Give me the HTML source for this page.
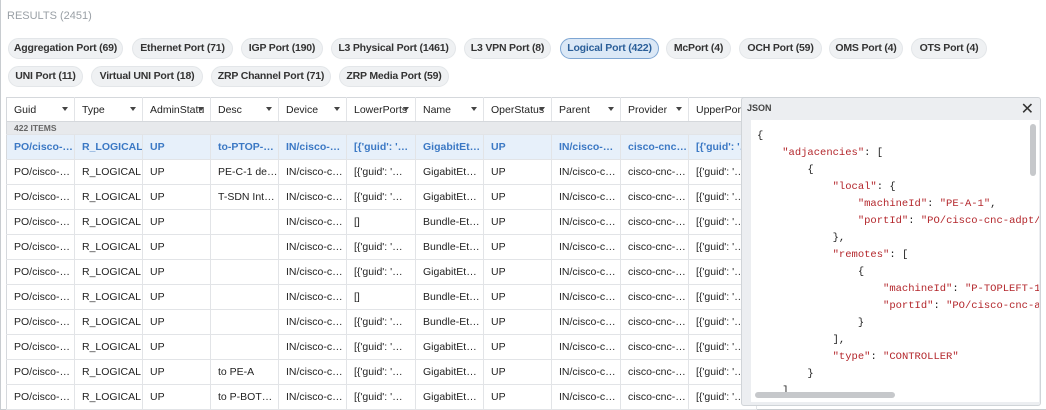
<!DOCTYPE html>
<html><head><meta charset="utf-8"><style>
*{box-sizing:border-box;margin:0;padding:0}
body{width:1046px;height:410px;background:#fff;font-family:"Liberation Sans",sans-serif;position:relative;overflow:hidden}
.frame{position:absolute;left:0;top:0;width:1046px;height:410px;border:1px solid #c8ccd0;border-top:none;border-right:none}
.title{position:absolute;left:7px;top:10px;font-size:11px;color:#9aa0a6}
.chip{position:absolute;height:21px;border-radius:11px;background:#eff1f3;border:1px solid #e3e6e9;font-size:10.5px;letter-spacing:-0.2px;font-weight:bold;color:#333;line-height:19px;text-align:center;white-space:nowrap}
.chip.sel{background:#dbe8f6;border-color:#7ea6d3;color:#2b5f99}
table{position:absolute;left:6px;top:97px;border-collapse:collapse;font-size:10.5px;table-layout:fixed;width:730px;border:1px solid #d5d8dc}
td,th{height:25px;border-right:1px solid #e2e4e7;border-bottom:1px solid #e2e4e7;padding:0 7px;white-space:nowrap;overflow:hidden;text-align:left;font-weight:normal;color:#222}
th{height:24px;background:#fff;border-bottom:1px solid #d5d8dc;position:relative}
th span.a{position:absolute;right:6px;top:9px;border-left:3px solid transparent;border-right:3px solid transparent;border-top:4px solid #444}
tr.items td{height:13px;background:#e7e9ec;font-size:8.5px;font-weight:bold;color:#666;border-right:none}
tr.sel td{background:#e7f0fa;color:#3b78c4;font-weight:bold}
.json{position:absolute;left:741px;top:97px;width:300px;height:309px;background:#eceef1;border:1px solid #d0d4d8;border-radius:3px}
.json .h{position:absolute;left:5px;top:5px;font-size:9px;font-weight:bold;color:#444}
.json .x{position:absolute;right:6px;top:1px;font-size:16px;color:#333}
.code{position:absolute;left:9px;top:22px;width:288px;height:282px;background:#fff;overflow:hidden;font-family:"Liberation Mono",monospace;font-size:10.5px;color:#222}
.code pre{position:absolute;left:6px;top:8px;line-height:17px;font-family:inherit}
.k{color:#b3262b}
.vs{position:absolute;right:3px;top:4px;width:6px;height:52px;border-radius:3px;background:#c6c8cb}
.hs{position:absolute;left:4px;bottom:4px;width:140px;height:6px;border-radius:3px;background:#c6c8cb}
</style></head><body>
<div class="frame"></div>
<div class="title">RESULTS (2451)</div>
<div class="chip" style="left:8px;top:38px;width:115px">Aggregation Port (69)</div>
<div class="chip" style="left:132px;top:38px;width:101px">Ethernet Port (71)</div>
<div class="chip" style="left:241px;top:38px;width:82px">IGP Port (190)</div>
<div class="chip" style="left:331px;top:38px;width:125px">L3 Physical Port (1461)</div>
<div class="chip" style="left:464px;top:38px;width:87px">L3 VPN Port (8)</div>
<div class="chip sel" style="left:560px;top:38px;width:99px">Logical Port (422)</div>
<div class="chip" style="left:666px;top:38px;width:65px">McPort (4)</div>
<div class="chip" style="left:739px;top:38px;width:83px">OCH Port (59)</div>
<div class="chip" style="left:829px;top:38px;width:74px">OMS Port (4)</div>
<div class="chip" style="left:911px;top:38px;width:76px">OTS Port (4)</div>
<div class="chip" style="left:8px;top:66px;width:75px">UNI Port (11)</div>
<div class="chip" style="left:91px;top:66px;width:112px">Virtual UNI Port (18)</div>
<div class="chip" style="left:211px;top:66px;width:120px">ZRP Channel Port (71)</div>
<div class="chip" style="left:339px;top:66px;width:110px">ZRP Media Port (59)</div>
<table>
<colgroup><col style="width:68px"><col style="width:68px"><col style="width:68px"><col style="width:68px"><col style="width:68px"><col style="width:69px"><col style="width:68px"><col style="width:68px"><col style="width:69px"><col style="width:68px"><col style="width:68px"></colgroup>
<tr><th>Guid<span class="a"></span></th><th>Type<span class="a"></span></th><th>AdminStatu<span class="a"></span></th><th>Desc<span class="a"></span></th><th>Device<span class="a"></span></th><th>LowerPorts<span class="a"></span></th><th>Name<span class="a"></span></th><th>OperStatus<span class="a"></span></th><th>Parent<span class="a"></span></th><th>Provider<span class="a"></span></th><th>UpperPorts</th></tr>
<tr class="items"><td colspan="11">422 ITEMS</td></tr>
<tr class="sel"><td>PO/cisco-…</td><td>R_LOGICAL</td><td>UP</td><td>to-PTOP-…</td><td>IN/cisco-…</td><td>[{'guid': '…</td><td>GigabitEt…</td><td>UP</td><td>IN/cisco-…</td><td>cisco-cnc…</td><td>[{'guid': '…</td></tr>
<tr><td>PO/cisco-…</td><td>R_LOGICAL</td><td>UP</td><td>PE-C-1 de…</td><td>IN/cisco-c…</td><td>[{'guid': '…</td><td>GigabitEt…</td><td>UP</td><td>IN/cisco-c…</td><td>cisco-cnc-…</td><td>[{'guid': '…</td></tr>
<tr><td>PO/cisco-…</td><td>R_LOGICAL</td><td>UP</td><td>T-SDN Int…</td><td>IN/cisco-c…</td><td>[{'guid': '…</td><td>GigabitEt…</td><td>UP</td><td>IN/cisco-c…</td><td>cisco-cnc-…</td><td>[{'guid': '…</td></tr>
<tr><td>PO/cisco-…</td><td>R_LOGICAL</td><td>UP</td><td></td><td>IN/cisco-c…</td><td>[]</td><td>Bundle-Et…</td><td>UP</td><td>IN/cisco-c…</td><td>cisco-cnc-…</td><td>[{'guid': '…</td></tr>
<tr><td>PO/cisco-…</td><td>R_LOGICAL</td><td>UP</td><td></td><td>IN/cisco-c…</td><td>[{'guid': '…</td><td>Bundle-Et…</td><td>UP</td><td>IN/cisco-c…</td><td>cisco-cnc-…</td><td>[{'guid': '…</td></tr>
<tr><td>PO/cisco-…</td><td>R_LOGICAL</td><td>UP</td><td></td><td>IN/cisco-c…</td><td>[{'guid': '…</td><td>GigabitEt…</td><td>UP</td><td>IN/cisco-c…</td><td>cisco-cnc-…</td><td>[{'guid': '…</td></tr>
<tr><td>PO/cisco-…</td><td>R_LOGICAL</td><td>UP</td><td></td><td>IN/cisco-c…</td><td>[]</td><td>Bundle-Et…</td><td>UP</td><td>IN/cisco-c…</td><td>cisco-cnc-…</td><td>[{'guid': '…</td></tr>
<tr><td>PO/cisco-…</td><td>R_LOGICAL</td><td>UP</td><td></td><td>IN/cisco-c…</td><td>[{'guid': '…</td><td>Bundle-Et…</td><td>UP</td><td>IN/cisco-c…</td><td>cisco-cnc-…</td><td>[{'guid': '…</td></tr>
<tr><td>PO/cisco-…</td><td>R_LOGICAL</td><td>UP</td><td></td><td>IN/cisco-c…</td><td>[{'guid': '…</td><td>GigabitEt…</td><td>UP</td><td>IN/cisco-c…</td><td>cisco-cnc-…</td><td>[{'guid': '…</td></tr>
<tr><td>PO/cisco-…</td><td>R_LOGICAL</td><td>UP</td><td>to PE-A</td><td>IN/cisco-c…</td><td>[{'guid': '…</td><td>GigabitEt…</td><td>UP</td><td>IN/cisco-c…</td><td>cisco-cnc-…</td><td>[{'guid': '…</td></tr>
<tr><td>PO/cisco-…</td><td>R_LOGICAL</td><td>UP</td><td>to P-BOT…</td><td>IN/cisco-c…</td><td>[{'guid': '…</td><td>GigabitEt…</td><td>UP</td><td>IN/cisco-c…</td><td>cisco-cnc-…</td><td>[{'guid': '…</td></tr>
</table>
<div class="json">
<div class="h">JSON</div>
<div class="x">✕</div>
<div class="code">
<pre>{
    <span class="k">"adjacencies"</span>: [
        {
            <span class="k">"local"</span>: {
                <span class="k">"machineId"</span>: <span class="k">"PE-A-1"</span>,
                <span class="k">"portId"</span>: <span class="k">"PO/cisco-cnc-adpt/IN/</span>
            },
            <span class="k">"remotes"</span>: [
                {
                    <span class="k">"machineId"</span>: <span class="k">"P-TOPLEFT-1"</span>,
                    <span class="k">"portId"</span>: <span class="k">"PO/cisco-cnc-adpt</span>
                }
            ],
            <span class="k">"type"</span>: <span class="k">"CONTROLLER"</span>
        }
    ]</pre>
<div class="vs"></div><div class="hs"></div>
</div>
</div>
</body></html>
